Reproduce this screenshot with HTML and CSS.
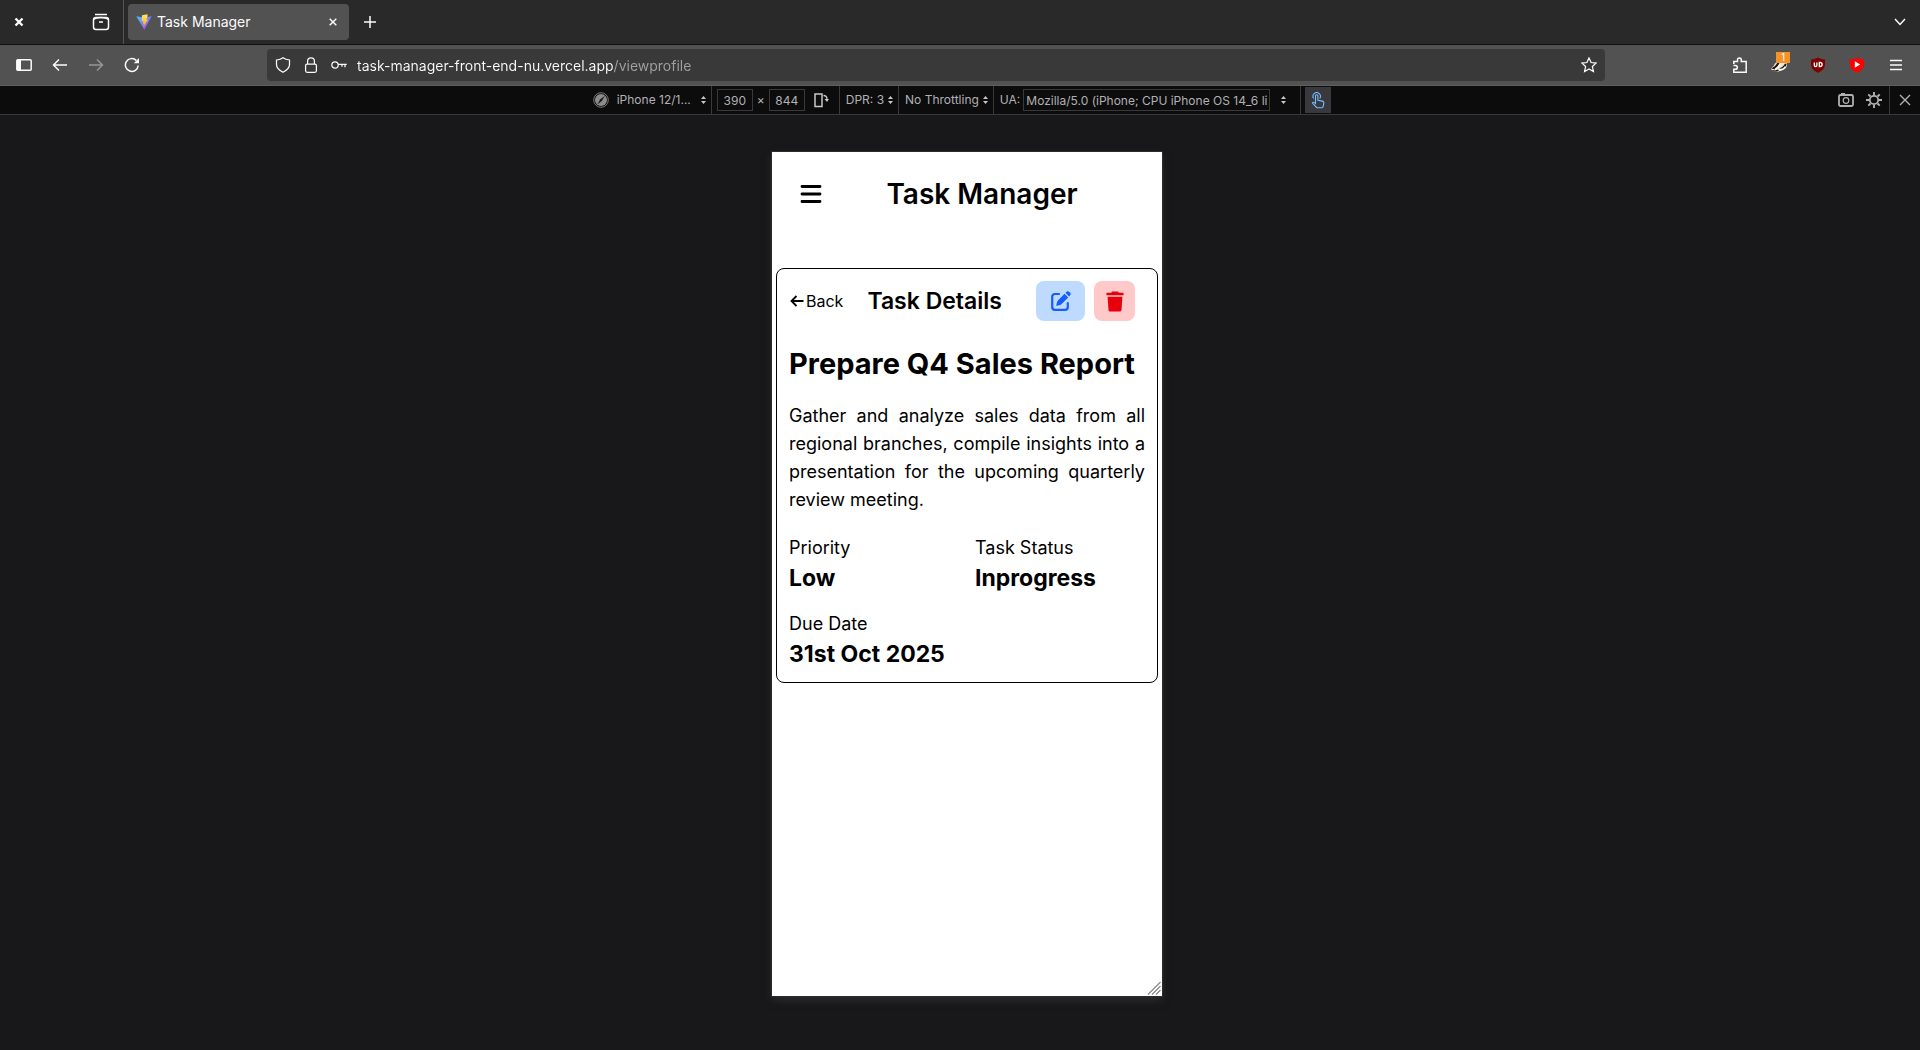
FILE: index.html
```
<!DOCTYPE html>
<html lang="en">
<head>
<meta charset="utf-8">
<meta name="viewport" content="width=device-width, initial-scale=1">
<title>Task Manager</title>
<link rel="stylesheet" href="styles.css">
</head>
<body>
<header class="tabstrip">
  <button class="icon-btn window-close" aria-label="Close window"><svg width="10" height="10" viewBox="0 0 10 10"><path d="M1.5 1.5l7 7M8.5 1.5l-7 7" class="line bold"/></svg></button>
  <button class="icon-btn recent" aria-label="Recent browsing"><svg width="18" height="18" viewBox="0 0 18 18"><path d="M3 1.5h12" class="line"/><rect x="1.5" y="4.5" width="15" height="12" rx="2.5" class="line"/><path d="M1.7 6.2Q4 4.4 9 4.4t7.3 1.8M7 9h4" class="line"/></svg></button>
  <div class="tab">
    <svg width="16" height="16" viewBox="0 0 16 16"><defs><linearGradient id="v1" x1="0" y1="0" x2="1" y2="1"><stop offset="0" stop-color="#41c5ff"/><stop offset="1" stop-color="#b833fe"/></linearGradient><linearGradient id="v2" x1="0" y1="0" x2="0" y2="1"><stop offset="0" stop-color="#ffea63"/><stop offset="1" stop-color="#ffa800"/></linearGradient></defs><path d="M.3 2.3l7.8 1.4 7.6-1.4L8.3 15.8z" fill="url(#v1)"/><path d="M11.5.2L6 1.3l-.4 6.2 1.7-.4-.5 2.6 1.2-.3-.7 3.6L12 5.6l-1.7.3 1.2-3z" fill="url(#v2)"/></svg>
    <span class="tab-title">Task Manager</span>
    <button class="icon-btn" aria-label="Close tab"><svg width="8" height="8" viewBox="0 0 8 8"><path d="M.7.7l6.6 6.6M7.3.7L.7 7.3" class="line"/></svg></button>
  </div>
  <button class="icon-btn new-tab" aria-label="New tab"><svg width="12" height="12" viewBox="0 0 12 12"><path d="M6 0v12M0 6h12" class="line"/></svg></button>
  <button class="icon-btn all-tabs" aria-label="List all tabs"><svg width="12" height="8" viewBox="0 0 12 8"><path d="M1 1l5 5.5L11 1" class="line"/></svg></button>
</header>

<nav class="toolbar" aria-label="Navigation">
  <div class="nav-buttons">
    <button class="icon-btn" aria-label="Show sidebars"><svg width="16" height="12" viewBox="0 0 16 12"><rect x=".8" y=".8" width="14.4" height="10.4" rx="1" class="line"/><path d="M1 1h4v10H1z" fill="#fbfbfe"/></svg></button>
    <button class="icon-btn" aria-label="Back"><svg width="16" height="14" viewBox="0 0 16 14"><path d="M15 7H1.5M7 1.5L1.5 7 7 12.5" class="line"/></svg></button>
    <button class="icon-btn dim" aria-label="Forward"><svg width="16" height="14" viewBox="0 0 16 14"><path d="M1 7h13.5M9 1.5L14.5 7 9 12.5" class="line"/></svg></button>
    <button class="icon-btn" aria-label="Reload"><svg width="16" height="16" viewBox="0 0 16 16"><path d="M14.2 8.5A6.4 6.4 0 1 1 12.3 3.4" class="line"/><path d="M15 1v5.2H9.8z" fill="#fbfbfe"/></svg></button>
  </div>
  <div class="urlbar">
    <svg width="16" height="16" viewBox="0 0 16 16"><path d="M8 .8c2 1.5 4.3 2 6.5 2.2v4.5c0 3.5-3 6-6.5 7.8-3.5-1.8-6.5-4.3-6.5-7.8V3C3.7 2.8 6 2.3 8 .8z" class="line thin"/></svg>
    <svg width="16" height="16" viewBox="0 0 16 16"><rect x="2.6" y="7" width="10.8" height="8.3" rx="1.5" class="line thin"/><path d="M4.6 7V4.2a3.4 3.4 0 0 1 6.8 0V7" class="line thin"/></svg>
    <svg width="16" height="16" viewBox="0 0 16 16"><circle cx="4" cy="8" r="3.2" class="line thin"/><path d="M7.2 7.3h8.5M14 7.3v3M11 7.3v2.5" class="line thin"/></svg>
    <input class="url" type="text" aria-label="Address" value="task-manager-front-end-nu.vercel.app/viewprofile">
    <button class="icon-btn" aria-label="Bookmark this page"><svg width="16" height="16" viewBox="0 0 16 16"><path d="M8 .9l2.1 4.6 5 .6-3.7 3.4 1 5L8 12l-4.4 2.5 1-5L.9 6.1l5-.6z" class="line thin"/></svg></button>
  </div>
  <div class="extensions">
    <button class="icon-btn" aria-label="Extensions"><svg width="16" height="16" viewBox="0 0 16 16"><path d="M1.8 7V4.6h3.7V3a1.9 1.9 0 0 1 3.8 0v1.6h4.9v10.6H1.8v-3h1.7a1.8 1.8 0 0 0 0-3.6H1.5" class="line"/></svg></button>
    <button class="icon-btn badged" aria-label="Privacy Badger, 1 blocked"><svg width="16" height="16" viewBox="0 0 16 16"><path d="M0 12Q3 9 4 6.5 7 2 15 4q2 3 0 7-3 3-8 3.5H2z" fill="#f3e5cb"/><path d="M.5 11.5L4 9l3-4 2 .5-2 4-3 3zM8 11.5q4-1 6-5l1.5.5q0 3-3 5zM1 13l3 .5 3-1 1 1-3 1H2z" fill="#191714"/><path d="M4 12.5q4-2 5-6M8 13q4 0 6.5-3.5" fill="none" stroke="#fff" stroke-width="1.4"/></svg><span class="badge">1</span></button>
    <button class="icon-btn" aria-label="uBlock Origin"><svg width="16" height="16" viewBox="0 0 16 16"><path d="M8 .5c2 1.2 4.5 1.9 7 2v4.3c0 4.5-2.5 6.9-7 8.9-4.5-2-7-4.4-7-8.9V2.5c2.5-.1 5-.8 7-2z" fill="#800000"/><path d="M4.3 5.5v2.7q0 1.3 1.3 1.3t1.3-1.3V5.5M9.3 5.5v4h.8q2 0 2-2t-2-2z" fill="none" stroke="#fff" stroke-width="1.3"/></svg></button>
    <button class="icon-btn" aria-label="Video blocker"><svg width="16" height="16" viewBox="0 0 16 16"><path d="M8 .8c2 1 4.5 1.7 7.2 1.7v4.3c0 4.4-2.7 6.9-7.2 8.9-4.5-2-7.2-4.5-7.2-8.9V2.5C3.5 2.5 6 1.8 8 .8z" fill="#f00"/><path d="M5.8 4.3v6.4L11.2 7.5z" fill="#fff"/></svg></button>
    <button class="icon-btn" aria-label="Application menu"><svg width="12" height="12" viewBox="0 0 12 12"><path d="M0 1.5h12M0 6h12M0 10.5h12" class="line"/></svg></button>
  </div>
</nav>

<section class="device-bar" aria-label="Responsive design">
  <div class="device-tools">
    <div class="group device">
      <svg width="16" height="16" viewBox="0 0 16 16"><circle cx="8" cy="8" r="7.3" fill="none" stroke="#777"/><circle cx="8" cy="8" r="6" fill="#8c8c8c"/><path d="M4.3 12.5l3-5.3L11.9 3.8 8.8 8.9z" fill="#18181a"/></svg>
      <button class="menu wide">iPhone 12/1...<svg width="5" height="8" viewBox="0 0 5 8"><path d="M0 3l2.5-3L5 3zM0 5l2.5 3L5 5z" fill="#c8c8c8"/></svg></button>
    </div>
    <div class="group size">
      <input class="field" type="text" aria-label="Width" value="390"><span>×</span><input class="field" type="text" aria-label="Height" value="844">
      <button class="icon-btn rotate" aria-label="Rotate"><svg width="15" height="15" viewBox="0 0 15 15"><rect x="1" y="1" width="7" height="12.5" fill="none" stroke="#c8c8c8" stroke-width="1.5"/><path d="M9.5 2.5q3.5 0 3.5 4" fill="none" stroke="#c8c8c8" stroke-width="1.3"/><path d="M10.5 6h4.5L13 9z" fill="#c8c8c8"/></svg></button>
    </div>
    <div class="group"><button class="menu">DPR: 3<svg width="5" height="8" viewBox="0 0 5 8"><path d="M0 3l2.5-3L5 3zM0 5l2.5 3L5 5z" fill="#c8c8c8"/></svg></button></div>
    <div class="group"><button class="menu">No Throttling<svg width="5" height="8" viewBox="0 0 5 8"><path d="M0 3l2.5-3L5 3zM0 5l2.5 3L5 5z" fill="#c8c8c8"/></svg></button></div>
    <div class="group agent">
      <label for="ua">UA:</label>
      <input class="field" id="ua" type="text" value="Mozilla/5.0 (iPhone; CPU iPhone OS 14_6 like Mac OS X)">
      <button class="icon-btn" aria-label="Choose user agent"><svg width="5" height="8" viewBox="0 0 5 8"><path d="M0 3l2.5-3L5 3zM0 5l2.5 3L5 5z" fill="#c8c8c8"/></svg></button>
    </div>
    <button class="icon-btn touch" aria-label="Touch simulation"><svg width="14" height="17" viewBox="0 0 14 17"><path d="M4.5 11.5V4a1.2 1.2 0 0 1 2.4 0v4.2l4.6.9q1.5.4 1.3 2l-.6 3.4q-.2 1.2-1.3 1.2H6.3q-.8 0-1.3-.8L1.4 11q.8-1.6 3.1.5zM2.7 6.5a3.7 3.7 0 1 1 6 0" fill="none" stroke="#75bfff" stroke-width="1.1"/></svg></button>
  </div>
  <div class="device-actions">
    <button class="icon-btn" aria-label="Take a screenshot"><svg width="16" height="14" viewBox="0 0 16 14"><rect x="1" y="2" width="14" height="11" rx="1.5" fill="none" stroke="#b1b1b3" stroke-width="1.8"/><path d="M3 0h4v2H3z" fill="#b1b1b3"/><circle cx="8" cy="7.5" r="2.8" fill="none" stroke="#b1b1b3" stroke-width="1.2"/></svg></button>
    <button class="icon-btn" aria-label="Settings"><svg width="16" height="16" viewBox="0 0 16 16"><circle cx="8" cy="8" r="4.2" fill="none" stroke="#b1b1b3" stroke-width="1.8"/><path d="M8 0v3M8 13v3M0 8h3M13 8h3M2.3 2.3l2.2 2.2M11.5 11.5l2.2 2.2M2.3 13.7l2.2-2.2M11.5 4.5l2.2-2.2" stroke="#b1b1b3" stroke-width="1.9"/></svg></button>
    <button class="icon-btn exit" aria-label="Close responsive design"><svg width="12" height="12" viewBox="0 0 12 12"><path d="M1 1l10 10M11 1L1 11" stroke="#b1b1b3" stroke-width="1.4"/></svg></button>
  </div>
</section>

<div class="stage">
  <main class="phone">
    <header class="app-header">
      <button class="icon-btn burger" aria-label="Menu"><svg width="22" height="20" viewBox="0 0 22 20"><path d="M2 2.5h18M2 10h18M2 17.5h18" fill="none" stroke="#000" stroke-width="2.8" stroke-linecap="round"/></svg></button>
      <h1>Task Manager</h1>
    </header>
    <article class="card">
      <div class="card-head">
        <a class="back" href="#"><svg width="15" height="12" viewBox="0 0 15 12"><path d="M14.5 6H2M7.5 1l-5 5 5 5" fill="none" stroke="#000" stroke-width="1.8"/></svg>Back</a>
        <h2>Task Details</h2>
        <div class="card-actions">
          <button class="action edit" aria-label="Edit task"><svg width="20" height="20" viewBox="0 0 20 20"><path d="M8 3H4Q1.2 3 1.2 5.8V16Q1.2 18.8 4 18.8H14Q16.8 18.8 16.8 16V12" fill="none" stroke="#155dfc" stroke-width="2.2" stroke-linecap="round"/><path d="M13.5 2.7l3.7 3.7-6.8 6.8q-.6.6-1.4.8l-3 .8q-.9.1-.7-.8l.8-3q.2-.8.8-1.4zM14.5 1.7l.8-.8q1.5-1.3 3 0l.7.7q1.4 1.5 0 3l-.8.8z" fill="#155dfc"/></svg></button>
          <button class="action delete" aria-label="Delete task"><svg width="18" height="21" viewBox="0 0 18 21"><path d="M6 .4h6l.8 1.4H17q.6 0 .6.6v1.4q0 .5-.6.5H1q-.6 0-.6-.5V2.4q0-.6.6-.6h4.2zM1.6 5.7h14.8l-.9 13.2q-.2 1.7-1.9 1.7H4.4q-1.7 0-1.9-1.7z" fill="#e7000b"/></svg></button>
        </div>
      </div>
      <h3 class="task-title">Prepare Q4 Sales Report</h3>
      <p class="description">Gather and analyze sales data from all regional branches, compile insights into a presentation for the upcoming quarterly review meeting.</p>
      <dl class="facts">
        <div><dt>Priority</dt><dd>Low</dd></div>
        <div><dt>Task Status</dt><dd>Inprogress</dd></div>
        <div><dt>Due Date</dt><dd>31st Oct 2025</dd></div>
      </dl>
    </article>
    <svg class="grip" width="14" height="14" viewBox="0 0 14 14"><path d="M1 13.5L13.5 1M5 13.5l8.5-8.5M9 13.5l4.5-4.5" stroke="#888" stroke-width="1.2"/></svg>
  </main>
</div>
</body>
</html>
```
FILE: styles.css
```
* { box-sizing: border-box; }

body {
  margin: 0;
  min-height: 100vh;
  display: flex;
  flex-direction: column;
  background: #18181a;
  color: #fbfbfe;
  font: 14px/20px Inter, "Liberation Sans", sans-serif;
}

h1, h2, h3, p, dl, dd { margin: 0; }

button, input {
  margin: 0;
  padding: 0;
  border: 0;
  background: none;
  color: inherit;
  font: inherit;
}

svg { display: block; flex: none; }
.line { fill: none; stroke: #fbfbfe; stroke-width: 1.5; }
.line.thin { stroke-width: 1.25; }
.line.bold { stroke-width: 2.4; }

.icon-btn {
  display: grid;
  place-items: center;
  flex: none;
  width: 16px;
  height: 24px;
}

/* Tab strip */
.tabstrip {
  display: flex;
  align-items: center;
  height: 45px;
  padding: 0 12px 0 11px;
  background: #292929;
  border-bottom: 1px solid #111;
}
.recent {
  box-sizing: content-box;
  height: 44px;
  margin-left: 65px;
  padding-right: 15px;
  border-right: 1px solid #555;
}
.tab {
  display: flex;
  align-items: center;
  gap: 5px;
  width: 221px;
  height: 36px;
  margin-left: 4px;
  padding: 0 8px;
  border-radius: 4px;
  background: #525252;
}
.tab-title { flex: 1; }
.new-tab { margin-left: 13px; }
.all-tabs { margin-left: auto; }

/* Navigation toolbar */
.toolbar {
  display: flex;
  align-items: center;
  height: 41px;
  padding: 0 16px;
  background: #525252;
  border-bottom: 1px solid #5e5e5e;
}
.nav-buttons { display: flex; gap: 20px; }
.dim { opacity: .4; }
.urlbar {
  display: flex;
  align-items: center;
  gap: 12px;
  flex: 1;
  height: 32px;
  margin: 0 127px;
  padding: 0 8px;
  border-radius: 4px;
  background: #393939;
}
.url {
  flex: 1;
  min-width: 0;
  height: 24px;
  margin-left: -2px;
  background: linear-gradient(90deg, #fbfbfe 257px, #a0a0a2 257px);
  background-clip: text;
  -webkit-background-clip: text;
  -webkit-text-fill-color: transparent;
}
.extensions { display: flex; gap: 23px; }
.badged { position: relative; }
.badge {
  position: absolute;
  top: -1px;
  left: 5px;
  width: 14px;
  height: 11px;
  background: #f39227;
  font-size: 10px;
  line-height: 11px;
}

/* Responsive design toolbar */
.device-bar {
  display: grid;
  grid-template-columns: 1fr auto 1fr;
  align-items: center;
  height: 29px;
  background: #0c0c0d;
  border-bottom: 1px solid #38383d;
  color: #b1b1b3;
  font-size: 12px;
  line-height: 16px;
}
.device-tools { grid-column: 2; display: flex; align-items: center; }
.group {
  display: flex;
  align-items: center;
  height: 28px;
  padding: 0 5px 0 6px;
  border-right: 1px solid #38383d;
}
.device { gap: 8px; padding: 0 5px 0 4px; }
.menu { display: flex; align-items: center; gap: 4px; }
.menu.wide { gap: 10px; }
.field {
  width: 36px;
  height: 22px;
  border: 1px solid #38383d;
  text-align: center;
}
.size { gap: 4px; padding: 0 9px 0 5px; }
.rotate { margin-left: 5px; }
.agent { gap: 3px; padding-right: 9px; }
#ua { width: 247px; margin-right: 2px; padding: 0 2px; text-align: left; }
.touch {
  width: 26px;
  height: 26px;
  margin-left: 4px;
  background: #38383d;
}
.device-actions { display: flex; align-items: center; justify-content: flex-end; gap: 12px; }
.exit { width: 31px; height: 28px; margin-left: -5px; border-left: 1px solid #38383d; }

/* Simulated phone */
.stage {
  display: flex;
  justify-content: center;
  flex: 1;
  padding: 37px 0 54px 14px;
}
.phone {
  position: relative;
  width: 390px;
  min-height: 844px;
  padding: 0 4px;
  background: #fff;
  box-shadow: 0 0 0 1px #2c2c2e, 0 4px 8px #2c2c2e;
  color: #000;
}
.grip { position: absolute; right: 1px; bottom: 1px; }

.app-header {
  display: flex;
  align-items: center;
  height: 84px;
  margin-bottom: 32px;
  padding-left: 24px;
}
.burger { width: 22px; }
.app-header h1 {
  flex: 1;
  padding-right: 16px;
  font-size: 28px;
  line-height: 36px;
  font-weight: 600;
  text-align: center;
}

.card {
  padding: 12px;
  border: 1px solid #000;
  border-radius: 8px;
}
.card-head {
  display: flex;
  align-items: center;
  justify-content: space-between;
  padding-right: 10px;
}
.back {
  display: flex;
  align-items: center;
  gap: 2px;
  color: #000;
  font-size: 16px;
  line-height: 24px;
  text-decoration: none;
}
.card-head h2 {
  margin-right: 10px;
  font-size: 23px;
  line-height: 32px;
  font-weight: 600;
}
.card-actions { display: flex; gap: 9px; }
.action {
  display: grid;
  place-items: center;
  width: 41px;
  height: 40px;
  border-radius: 8px;
}
.edit { width: 49px; background: #bedbff; }
.delete { background: #ffc9c9; }

.task-title {
  margin: 25px 0 20px;
  font-size: 29px;
  line-height: 36px;
  font-weight: 700;
}
.description {
  font-size: 18px;
  line-height: 28px;
  text-align: justify;
}
.facts {
  display: grid;
  grid-template-columns: 1fr 1fr;
  gap: 16px;
  margin-top: 20px;
  font-size: 18px;
  line-height: 28px;
}
.facts dd {
  font-size: 23px;
  line-height: 32px;
  font-weight: 700;
}
```
